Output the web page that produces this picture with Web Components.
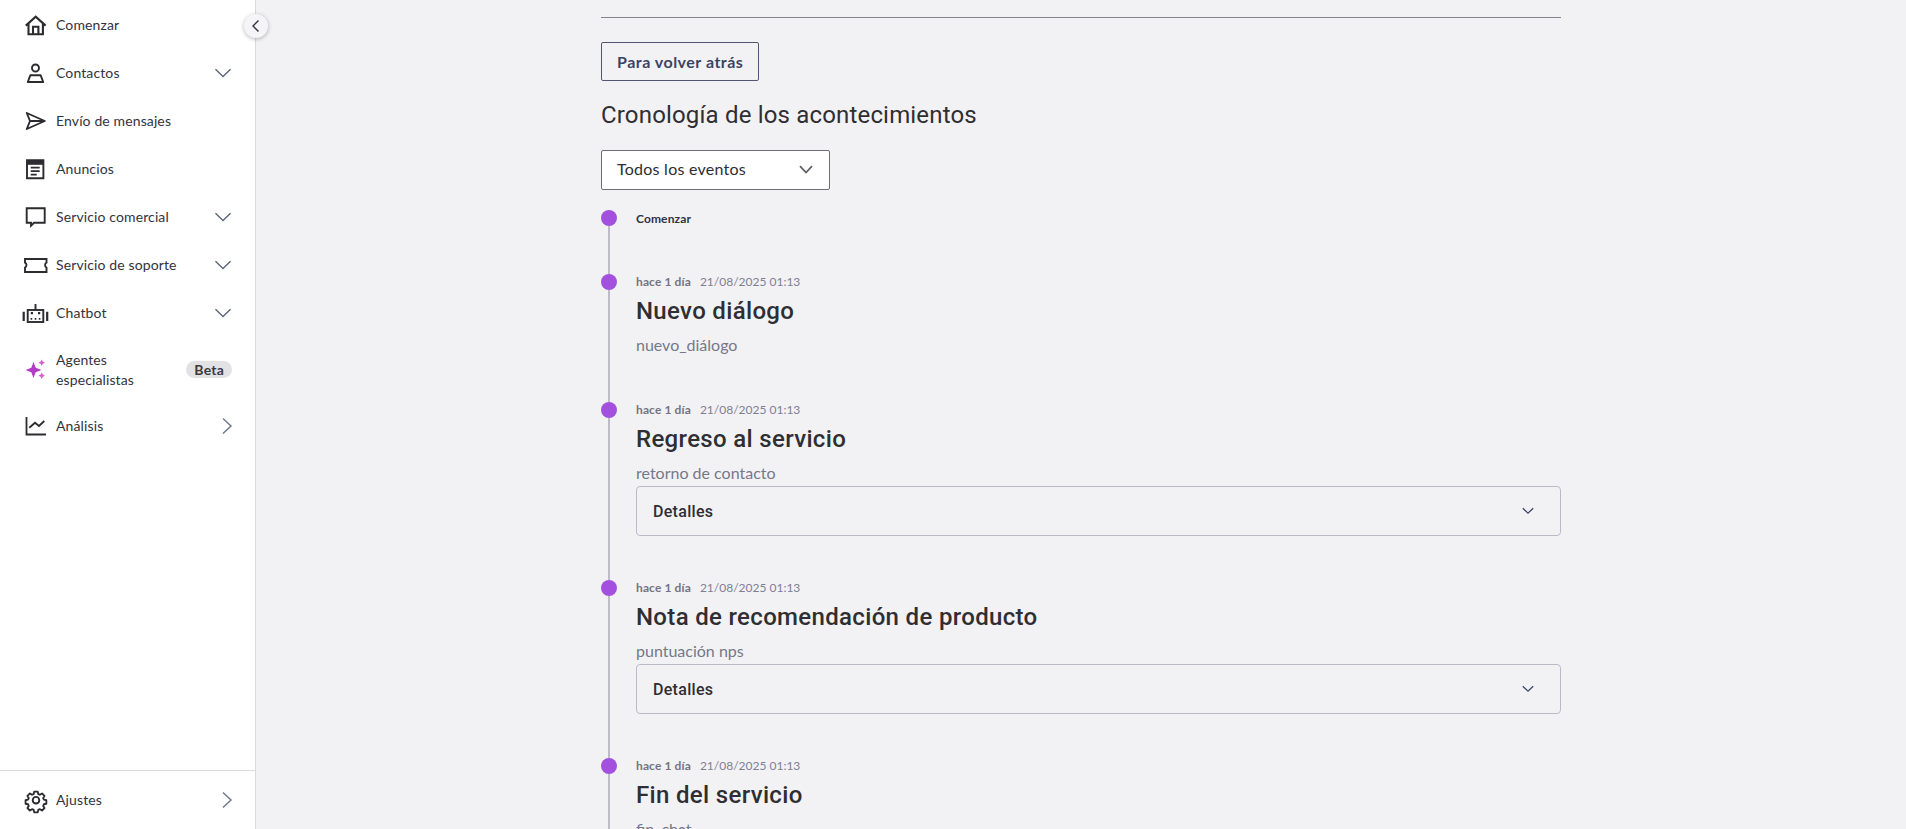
<!DOCTYPE html>
<html lang="es"><head><meta charset="utf-8"><title>Cronología</title>
<style>
html,body{margin:0;height:829px;overflow:hidden;background:#f2f2f5;font-family:"Lato","Noto Sans",sans-serif;color:#2c2c30}
body{display:flex}
</style></head><body>
<app-sidebar>
<nav-item icon="home">Comenzar</nav-item>
<nav-item icon="user" arrow="down">Contactos</nav-item>
<nav-item icon="send">Envío de mensajes</nav-item>
<nav-item icon="news">Anuncios</nav-item>
<nav-item icon="chat" arrow="down">Servicio comercial</nav-item>
<nav-item icon="ticket" arrow="down">Servicio de soporte</nav-item>
<nav-item icon="bot" arrow="down">Chatbot</nav-item>
<nav-item icon="spark" badge="Beta" tall>Agentes especialistas</nav-item>
<nav-item icon="chart" arrow="right">Análisis</nav-item>
<nav-item slot="footer" icon="gear" arrow="right">Ajustes</nav-item>
</app-sidebar>
<main-panel>
<back-button>Para volver atrás</back-button>
<section-title>Cronología de los acontecimientos</section-title>
<event-select>Todos los eventos</event-select>
<event-timeline>
<time-item start meta="Comenzar"></time-item>
<time-item plain ago="hace 1 día" date="21/08/2025 01:13" name="Nuevo diálogo" sub="nuevo_diálogo"></time-item>
<time-item ago="hace 1 día" date="21/08/2025 01:13" name="Regreso al servicio" sub="retorno de contacto"><detail-box>Detalles</detail-box></time-item>
<time-item ago="hace 1 día" date="21/08/2025 01:13" name="Nota de recomendación de producto" sub="puntuación nps"><detail-box>Detalles</detail-box></time-item>
<time-item plain ago="hace 1 día" date="21/08/2025 01:13" name="Fin del servicio" sub="fin_chat"></time-item>
</event-timeline>
</main-panel>
<script>
const S='#2c2c30';
const ICONS={
home:`<path d="M1.8 12.6 11.7 3.6l9.9 9M4.5 10.6V21.2h14.4V10.6M9 21.2v-7.4h5.4v7.4" fill="none" stroke="${S}" stroke-width="2.1"/>`,
user:`<circle cx="11.5" cy="7" r="3.5" fill="none" stroke="${S}" stroke-width="1.9"/><path d="M6.4 14.2h10.2l2.6 6.8H3.8z" fill="none" stroke="${S}" stroke-width="1.9" stroke-linejoin="round"/>`,
send:`<path d="M2.8 4 20.8 12 2.8 20 6 12zM6 12H20.5" fill="none" stroke="${S}" stroke-width="1.9" stroke-linejoin="round"/>`,
news:`<path d="M3 3.2h16.4v18H3z" fill="none" stroke="${S}" stroke-width="1.9"/><path d="M3 3.2h16.4v4.6H3z" fill="${S}"/><path d="M6.7 10.6h9M6.7 14.1h9M6.7 17.6h6" stroke="${S}" stroke-width="1.6" fill="none"/>`,
chat:`<path d="M2.7 3.3h18v14.5H10l-3 3v-3H2.7z" fill="none" stroke="${S}" stroke-width="1.9"/>`,
ticket:`<path d="M1 6h21.5v3.6c-1.9.7-1.9 4.3 0 5V19H1v-4.4c1.9-.7 1.9-4.3 0-5z" fill="none" stroke="${S}" stroke-width="1.9"/>`,
bot:`<rect x="3.7" y="9" width="15.6" height="12" fill="none" stroke="${S}" stroke-width="1.9"/><path d="M11.5 9V3" stroke="${S}" stroke-width="1.9"/><path d="M-.3 10.7V20M23.2 10.7V20" stroke="${S}" stroke-width="2.2"/><path d="M6.8 11h2.2v2.2H6.8zM14 11h2.2v2.2H14zM6.6 17.1h1.6v1.6H6.6zM10.7 17.1h1.6v1.6h-1.6zM14.8 17.1h1.6v1.6h-1.6z" fill="${S}"/>`,
spark:`<path d="M9.5 4 11.7 9.8l5.8 2.2-5.8 2.2-2.2 5.8-2.2-5.8L1.5 12l5.8-2.2z" fill="#b43bc6"/><path d="M17.7 1.4 18.8 3.6 21 4.7 18.8 5.8 17.7 8 16.6 5.8 14.4 4.7 16.6 3.6zM17.7 14.4 18.8 16.6 21 17.7 18.8 18.8 17.7 21 16.6 18.8 14.4 17.7 16.6 16.6z" fill="#d65fc8"/>`,
chart:`<path d="M2.5 3v17.5H22" fill="none" stroke="${S}" stroke-width="1.8"/><path d="M5.3 13.7 11 8.7l4 3.3 5.3-5" fill="none" stroke="${S}" stroke-width="1.8"/>`,
gear:`<path d="M10 2.5h4l.6 2.8 1.9.8 2.4-1.5 2.8 2.8-1.5 2.4.8 1.9 2.8.6v4l-2.8.6-.8 1.9 1.5 2.4-2.8 2.8-2.4-1.5-1.9.8-.6 2.8h-4l-.6-2.8-1.9-.8-2.4 1.5-2.8-2.8 1.5-2.4-.8-1.9-2.8-.6v-4l2.8-.6.8-1.9-1.5-2.4 2.8-2.8 2.4 1.5 1.9-.8z" transform="translate(1.4 1.4) scale(.88)" fill="none" stroke="${S}" stroke-width="2.1" stroke-linejoin="round"/><circle cx="12" cy="12.2" r="3.3" fill="none" stroke="${S}" stroke-width="1.9"/>`
};
const def=(n,html)=>customElements.define(n,class extends HTMLElement{connectedCallback(){if(this.shadowRoot)return;const s=this.attachShadow({mode:'open'});s.innerHTML=typeof html==='function'?html(this):html;}});
def('app-sidebar',`<style>
:host{display:flex;flex-direction:column;width:255px;height:829px;background:#fff;border-right:1px solid #d9d9e0;position:relative;flex:none}
.top{flex:1;padding-top:1px}
.foot{border-top:1px solid #d9d9e0;height:58px;display:flex;align-items:center}
.foot ::slotted(*){flex:1}
.toggle{position:absolute;left:244px;top:14px;width:24px;height:24px;border-radius:50%;background:#f5f5f7;box-shadow:0 1px 4px rgba(0,0,0,.28);display:flex;align-items:center;justify-content:center;z-index:2}
</style><div class="top"><slot></slot></div><div class="foot"><slot name="footer"></slot></div>
<div class="toggle"><svg width="12" height="14" viewBox="0 0 12 14"><path d="M8.5 1.5 3 7l5.5 5.5" fill="none" stroke="#33333a" stroke-width="1.4"/></svg></div>`);
def('nav-item',h=>{
const a=h.getAttribute('arrow'),b=h.getAttribute('badge'),tall=h.hasAttribute('tall');
const arr=a==='down'?'<svg class="ar" width="18" height="10" viewBox="0 0 18 10"><path d="M1.5 1.2 9 8.5l7.5-7.3" fill="none" stroke="#5f6679" stroke-width="1.4"/></svg>':a==='right'?'<svg class="ar r" width="12" height="18" viewBox="0 0 12 18"><path d="M2 1.5 10 9l-8 7.5" fill="none" stroke="#6f7a8f" stroke-width="1.5"/></svg>':'';
return `<style>
:host{display:block}
.r0{display:flex;align-items:center;height:${tall?65:48}px;padding:0 23px;font-size:14px;line-height:20px;color:#33333c}
svg.i{width:26px;height:24px;flex:none;margin-right:7px;overflow:visible}
.t{flex:none;letter-spacing:.12px;${tall?'max-width:90px':'white-space:nowrap'}}
.sp{flex:1}
.ar{flex:none}
.ar.r{margin-right:-1px}
.b{flex:none;height:17px;line-height:17px;padding:0 8px;border-radius:9px;background:#e2e2e4;font-size:14px;font-weight:700;letter-spacing:.2px;color:#3a3a40}
</style><div class="r0"><svg class="i" viewBox="0 0 24 24">${ICONS[h.getAttribute('icon')]}</svg><span class="t"><slot></slot></span><span class="sp"></span>${b?`<span class="b">${b}</span>`:''}${arr}</div>`});
def('main-panel',`<style>
:host{display:flex;justify-content:center;flex:1;min-width:0;height:829px;overflow:hidden}
.w{width:960px;flex:none}
hr{border:0;border-top:1px solid #85858c;margin:17px 0 24px}
</style><div class="w"><hr><slot></slot></div>`);
def('back-button',`<style>
:host{display:block;width:max-content;height:37px;line-height:37px;padding:0 15px 0 15px;border:1px solid #4e5673;border-radius:2px;font-size:16px;font-weight:700;letter-spacing:.5px;color:#3c4463}
</style><slot></slot>`);
def('section-title',`<style>
:host{display:block;font:400 24px/32px "Roboto",sans-serif;color:#2e2e33;margin:18px 0 19px;letter-spacing:.17px}
</style><slot></slot>`);
def('event-select',`<style>
:host{display:flex;align-items:center;justify-content:space-between;box-sizing:border-box;width:229px;height:40px;padding:0 16px 3px 15px;background:#fff;border:1px solid #6e6e75;border-radius:2px;font-size:16px;letter-spacing:.25px;color:#2e2e33;margin-bottom:20px}
svg{position:relative;top:1px}
</style><slot></slot><svg width="14" height="9" viewBox="0 0 14 9"><path d="M1 1.2 7 7.5l6-6.3" fill="none" stroke="#5e5e66" stroke-width="1.7"/></svg>`);
def('event-timeline',`<style>:host{display:block}</style><slot></slot>`);
def('time-item',h=>{
const st=h.hasAttribute('start');
const top=st?`<span class="ago st">${h.getAttribute('meta')}</span>`:`<span class="ago">${h.getAttribute('ago')}</span><span class="date">${h.getAttribute('date')}</span>`;
const body=st?'':`<div class="name">${h.getAttribute('name')}</div><div class="sub">${h.getAttribute('sub')}</div>`;
return `<style>
:host{display:grid;grid-template-columns:16px 1fr;column-gap:19px}
.rail{display:flex;flex-direction:column;align-items:center}
.dot{width:16px;height:16px;border-radius:50%;background:#a350de;flex:none}
.line{width:2px;flex:1;background:#bcbdc9}
.c{padding-bottom:44px;min-width:0}
.meta{height:16px;line-height:16px;font-size:12px;display:flex;gap:9px}
.ago{font-weight:700;letter-spacing:.12px;color:#74747e}.ago.st{color:#2f3346;position:relative;top:1px}
.date{color:#7d8093}
.name{font:500 24px/32px "Roboto",sans-serif;letter-spacing:.33px;color:#2e2e33;margin-top:5px}
.sub{font-size:16px;line-height:20px;color:#747889;margin-top:8px}
.box{margin-top:3px}
:host([start]) .c{padding-bottom:48px}
:host([plain]) .c{padding-bottom:47px}
</style><div class="rail"><div class="dot"></div><div class="line"></div></div><div class="c"><div class="meta">${top}</div>${body}<slot></slot></div>`});
def('detail-box',`<style>
:host{display:flex;align-items:center;justify-content:space-between;box-sizing:border-box;height:50px;padding:0 26px 0 16px;border:1px solid #b9bbc9;border-radius:4px;font:500 16px "Roboto",sans-serif;letter-spacing:.3px;color:#2e2e33;margin-top:3px}
</style><slot></slot><svg width="12" height="8" viewBox="0 0 12 8"><path d="M.8 1.2 6 6.2l5.2-5" fill="none" stroke="#3c4463" stroke-width="1.3"/></svg>`);
</script>
</body></html>
